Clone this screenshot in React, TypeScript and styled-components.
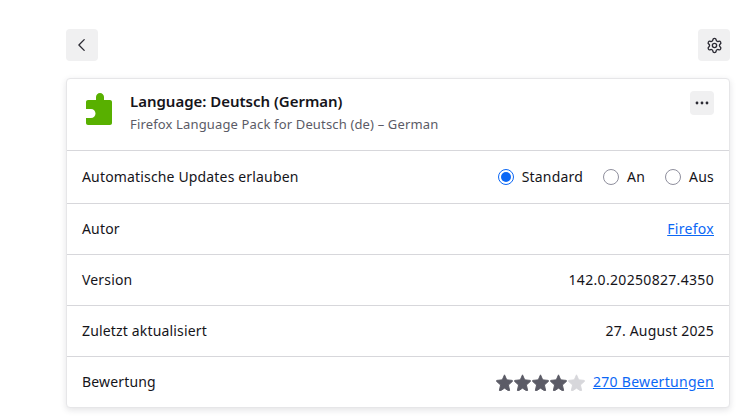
import styled, { createGlobalStyle } from 'styled-components'
import { Settings } from 'lucide-react'

const GlobalStyle = createGlobalStyle`
  html, body {
    margin: 0;
    padding: 0;
    background: #fff;
    overflow: hidden;
  }
  body {
    font-family: "Noto Sans", "Open Sans", sans-serif;
    font-size: 14px;
    letter-spacing: 0.16px;
    color: #15141a;
  }
`

const Page = styled.main`
  width: 750px;
  height: 416px;
  box-sizing: border-box;
  padding: 29px 20px 0 66px;
`

const TopBar = styled.div`
  display: flex;
  justify-content: space-between;
  align-items: center;
  height: 32px;
  margin-bottom: 17px;
`

const IconButton = styled.button<{ $size?: number }>`
  width: ${p => p.$size ?? 32}px;
  height: ${p => p.$size ?? 32}px;
  padding: 0;
  border: none;
  border-radius: 4px;
  background: #f0f0f1;
  color: #2b2a33;
  display: flex;
  align-items: center;
  justify-content: center;
`

const Card = styled.section`
  width: 664px;
  box-sizing: border-box;
  background: #fff;
  border: 1px solid #e6e6e8;
  border-radius: 4px;
  box-shadow: 0 2px 6px rgba(58, 57, 68, 0.14);
`

const Header = styled.header`
  height: 71px;
  display: flex;
  align-items: flex-start;
  padding: 0 15px;
`

const AddonIcon = styled.svg`
  width: 32px;
  height: 32px;
  margin-top: 14px;
  flex-shrink: 0;
`

const Titles = styled.div`
  margin-left: 16px;
  margin-top: 11px;
  flex: 1;
`

const Title = styled.h1`
  margin: 0;
  font-size: 15px;
  line-height: 22px;
  font-weight: 600;
  letter-spacing: -0.02px;
`

const Subtitle = styled.p`
  margin: 2px 0 0;
  font-size: 13px;
  line-height: 21px;
  color: #5b5b66;
  letter-spacing: 0.15px;
`

const MoreSlot = styled.div`
  margin-top: 12px;
`

const Row = styled.div<{ $height: number }>`
  height: ${p => p.$height}px;
  box-sizing: border-box;
  border-top: 1px solid #d7d7db;
  padding: 0 15px;
  display: flex;
  align-items: center;
  justify-content: space-between;
  line-height: 20px;
`

const RadioGroup = styled.div`
  display: flex;
  align-items: center;
  letter-spacing: 0.2px;
`

const RadioItem = styled.label<{ $gap: number }>`
  display: flex;
  align-items: center;
  margin-left: ${p => p.$gap}px;
`

const RadioDot = styled.span<{ $checked?: boolean }>`
  width: 16px;
  height: 16px;
  box-sizing: border-box;
  border-radius: 50%;
  border: ${p => (p.$checked ? '1.5px solid #0b67f5' : '1px solid #8f8f9d')};
  margin-right: 8px;
  display: flex;
  align-items: center;
  justify-content: center;
  &::after {
    content: '';
    display: ${p => (p.$checked ? 'block' : 'none')};
    width: 10px;
    height: 10px;
    border-radius: 50%;
    background: #0b67f5;
  }
`

const Link = styled.a`
  color: #0b67f5;
  letter-spacing: 0.3px;
  text-decoration: underline;
`

const Numeric = styled.span<{ $spacing: number }>`
  letter-spacing: ${p => p.$spacing}px;
`

const Rating = styled.div`
  display: flex;
  align-items: center;
`

const Stars = styled.div`
  display: flex;
  margin-right: 7px;
`

const Star = styled.svg<{ $on: boolean }>`
  width: 17px;
  height: 17px;
  margin-right: 1px;
  fill: ${p => (p.$on ? '#5b5b66' : '#d7d7db')};
  stroke: ${p => (p.$on ? '#5b5b66' : '#d7d7db')};
  stroke-width: 0.9px;
  stroke-linejoin: round;
`

const starPath = 'M8 .8l2.1 4.7 5.1.5c.4 0 .6.6.3.9l-3.8 3.4 1.1 5c.1.4-.4.8-.8.6L8 13.3l-4 2.6c-.4.2-.9-.2-.8-.6l1.1-5L.5 6.9c-.3-.3-.1-.9.3-.9l5.1-.5L8 .8z'

const App = () => {
  const radios = [
    { label: 'Standard', checked: true, gap: 0 },
    { label: 'An', checked: false, gap: 20 },
    { label: 'Aus', checked: false, gap: 20 },
  ]

  return (
    <>
      <GlobalStyle />
      <Page>
        <TopBar>
          <IconButton aria-label="Zurück">
            <svg width="16" height="16" viewBox="0 0 16 16" fill="none" stroke="#2b2a33" strokeWidth="1.3" strokeLinecap="round" strokeLinejoin="round">
              <path d="M10.2 2.6 4.9 8l5.3 5.4" />
            </svg>
          </IconButton>
          <IconButton aria-label="Einstellungen">
            <Settings size={17} strokeWidth={1.9} color="#2b2a33" />
          </IconButton>
        </TopBar>
        <Card>
          <Header>
            <AddonIcon viewBox="0 0 32 32">
              <path
                fill="#58b000"
                d="M14 4c0-2.200 1.800-4 4-4s4 1.800 4 4v3h6c1.100 0 2 .9 2 2v21c0 1.100-.9 2-2 2H6c-1.100 0-2-.9-2-2v-5h5c2.500 0 4.500-2 4.500-4.500S11.500 16 9 16H4V9c0-1.100.9-2 2-2h8V4z"
              />
            </AddonIcon>
            <Titles>
              <Title>Language: Deutsch (German)</Title>
              <Subtitle>Firefox Language Pack for Deutsch (de) – German</Subtitle>
            </Titles>
            <MoreSlot>
              <IconButton $size={24} aria-label="Mehr">
                <svg width="16" height="16" viewBox="0 0 16 16" fill="#2b2a33">
                  <circle cx="3" cy="8" r="1.4" />
                  <circle cx="8" cy="8" r="1.4" />
                  <circle cx="13" cy="8" r="1.4" />
                </svg>
              </IconButton>
            </MoreSlot>
          </Header>
          <Row $height={53}>
            <span>Automatische Updates erlauben</span>
            <RadioGroup>
              {radios.map(r => (
                <RadioItem key={r.label} $gap={r.gap}>
                  <RadioDot $checked={r.checked} />
                  {r.label}
                </RadioItem>
              ))}
            </RadioGroup>
          </Row>
          <Row $height={51}>
            <span>Autor</span>
            <Link href="#">Firefox</Link>
          </Row>
          <Row $height={51}>
            <span>Version</span>
            <Numeric $spacing={0.32}>142.0.20250827.4350</Numeric>
          </Row>
          <Row $height={51}>
            <span>Zuletzt aktualisiert</span>
            <Numeric $spacing={0.18}>27. August 2025</Numeric>
          </Row>
          <Row $height={51}>
            <span>Bewertung</span>
            <Rating>
              <Stars>
                {[0, 1, 2, 3, 4].map(i => (
                  <Star key={i} $on={i < 4} viewBox="0 0 16 16">
                    <path d={starPath} />
                  </Star>
                ))}
              </Stars>
              <Link href="#">270 Bewertungen</Link>
            </Rating>
          </Row>
        </Card>
      </Page>
    </>
  )
}

export default App
